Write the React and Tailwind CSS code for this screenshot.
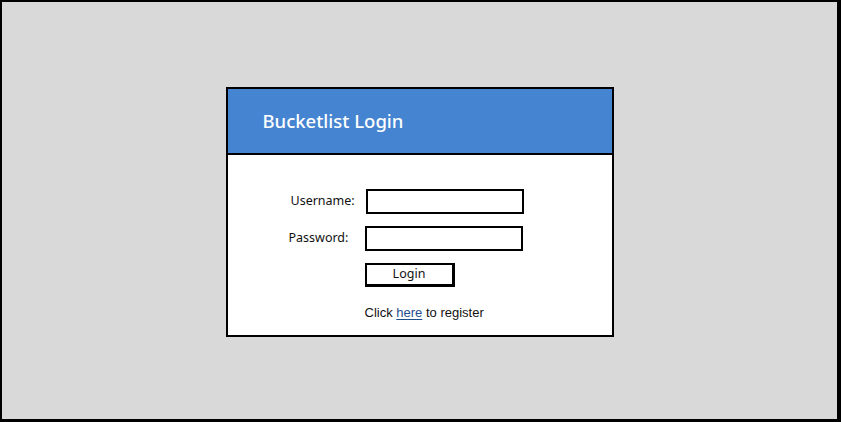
export default function App() {
  return (
    <div className="w-[841px] h-[422px] bg-[#d9d9d9] border-2 border-r-[4px] border-b-[3px] border-black flex items-start justify-center pt-[85px]" style={{ fontFamily: '"Noto Sans", sans-serif' }}>
      <div className="w-[388px] h-[250px] border-2 border-black bg-white flex flex-col">
        <div className="h-[66px] bg-[#4584d0] border-b-2 border-black flex items-center pl-[35px] pt-[1px] shrink-0">
          <span className="text-white text-[18.5px] font-medium leading-none">Bucketlist Login</span>
        </div>
        <div className="flex-1 flex flex-col text-[12.5px] text-[#111]">
          <div className="flex items-center mt-[34px] pl-[63px]">
            <span className="w-[75px] leading-none">Username:</span>
            <div className="w-[158px] h-[25px] border-2 border-black bg-white"></div>
          </div>
          <div className="flex items-center mt-[12px] pl-[61px]">
            <span className="w-[76px] leading-none">Password:</span>
            <div className="w-[158px] h-[25px] border-2 border-black bg-white"></div>
          </div>
          <div className="flex mt-[12px] pl-[137px]">
            <div className="w-[90px] h-[24px] border-2 border-r-[3px] border-b-[3px] border-black flex items-center justify-center">
              <span className="leading-none">Login</span>
            </div>
          </div>
          <div className="mt-[19px] pl-[137px] leading-none text-[13px]" style={{ fontFamily: '"Liberation Sans", sans-serif' }}>
            Click <span className="text-[#1f4e8c] underline underline-offset-2">here</span> to register
          </div>
        </div>
      </div>
    </div>
  );
}
